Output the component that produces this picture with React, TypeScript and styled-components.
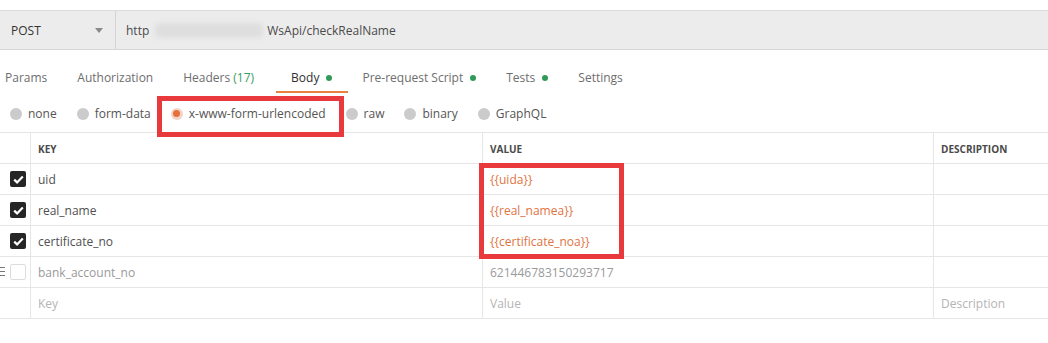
import React from "react";
import styled, { createGlobalStyle } from "styled-components";

const Global = createGlobalStyle`
  html, body { margin: 0; padding: 0; background: #ffffff; }
  body { font-family: "Open Sans", "Liberation Sans", sans-serif; font-size: 12px; color: #505050; }
  * { box-sizing: border-box; }
`;

const Page = styled.div`
  position: relative;
  width: 1048px;
  height: 343px;
  padding-top: 10px;
  overflow: hidden;
`;

const UrlBar = styled.div`
  display: flex;
  height: 40px;
  background: #ececec;
  border-top: 1px solid #dcdcdc;
  border-bottom: 1px solid #d6d6d6;
`;

const Method = styled.div`
  width: 116px;
  display: flex;
  align-items: center;
  justify-content: space-between;
  padding: 0 12px 0 11px;
  border-right: 1px solid #d4d4d4;
  color: #333;
  font-size: 12px;
`;

const Caret = styled.span`
  width: 0;
  height: 0;
  border-left: 4px solid transparent;
  border-right: 4px solid transparent;
  border-top: 5px solid #8a8a8a;
`;

const Url = styled.div`
  display: flex;
  align-items: center;
  padding-left: 10px;
  color: #4a4a4a;
  font-size: 12px;
`;

const Blur = styled.span`
  display: inline-block;
  width: 108px;
  height: 15px;
  margin: 0 4px 0 6px;
  background: #dedede;
  border-radius: 5px;
  filter: blur(2.5px);
`;

const Tabs = styled.div`
  display: flex;
  gap: 30px;
  height: 43px;
  padding: 12px 0 0 5px;
  align-items: center;
`;

const Tab = styled.div<{ $active?: boolean }>`
  position: relative;
  display: flex;
  align-items: center;
  gap: 5px;
  margin-left: ${(p) => (p.$active ? "7px" : "0")};
  color: ${(p) => (p.$active ? "#303030" : "#6e6e6e")};
  font-size: 12px;
  height: 31px;
  &::after {
    content: "";
    display: ${(p) => (p.$active ? "block" : "none")};
    position: absolute;
    left: -15px;
    right: -16px;
    bottom: 0;
    height: 2px;
    background: #e8803f;
  }
`;

const Count = styled.span`
  color: #3a9d5d;
`;

const Dot = styled.span`
  width: 6px;
  height: 6px;
  margin-left: 2px;
  border-radius: 50%;
  background: #2f9a55;
`;

const Radios = styled.div`
  display: flex;
  align-items: center;
  gap: 20px;
  height: 40px;
  padding: 2px 0 0 10px;
  border-bottom: 1px solid #e6e6e6;
`;

const RadioItem = styled.label`
  display: flex;
  align-items: center;
  gap: 6px;
  color: #555;
  font-size: 12px;
`;

const Radio = styled.span<{ $on?: boolean }>`
  width: 12px;
  height: 12px;
  border-radius: 50%;
  background: ${(p) => (p.$on ? "#f0d5c8" : "#cbcbcb")};
  display: flex;
  align-items: center;
  justify-content: center;
  &::after {
    content: "";
    display: ${(p) => (p.$on ? "block" : "none")};
    width: 7px;
    height: 7px;
    border-radius: 50%;
    background: #e8703a;
  }
`;

const Table = styled.div`
  display: grid;
  grid-template-columns: 30px 452px 451px 1fr;
`;

const Cell = styled.div<{ $head?: boolean; $tone?: "normal" | "muted" | "ph" | "var" }>`
  height: 31px;
  display: flex;
  align-items: center;
  padding-left: 7px;
  padding-top: ${(p) => (p.$head ? "2px" : "0")};
  border-bottom: 1px solid #e6e6e6;
  border-left: 1px solid #e6e6e6;
  font-size: ${(p) => (p.$head ? "10px" : "12px")};
  font-weight: ${(p) => (p.$head ? 700 : 400)};
  color: ${(p) =>
    p.$head
      ? "#4a4a4a"
      : p.$tone === "muted"
      ? "#9a9a9a"
      : p.$tone === "ph"
      ? "#b4b4b4"
      : p.$tone === "var"
      ? "#e0743f"
      : "#505050"};
`;

const CheckCell = styled.div`
  position: relative;
  height: 31px;
  display: flex;
  align-items: center;
  padding-left: 10px;
  border-bottom: 1px solid #e6e6e6;
`;

const Box = styled.span<{ $on?: boolean }>`
  width: 16px;
  height: 16px;
  border-radius: 2px;
  background: ${(p) => (p.$on ? "#262626" : "#ffffff")};
  border: ${(p) => (p.$on ? "none" : "1px solid #dcdcdc")};
  display: flex;
  align-items: center;
  justify-content: center;
`;

const Handle = styled.span`
  position: absolute;
  left: -1px;
  top: 10px;
  width: 6px;
  height: 9px;
  background: repeating-linear-gradient(#777 0 1px, transparent 1px 4px);
`;

const Mark = styled.div<{ $x: number; $y: number; $w: number; $h: number }>`
  position: absolute;
  left: ${(p) => p.$x}px;
  top: ${(p) => p.$y}px;
  width: ${(p) => p.$w}px;
  height: ${(p) => p.$h}px;
  border: 5px solid #e8393d;
  pointer-events: none;
`;

const Check = () => (
  <svg width="11" height="9" viewBox="0 0 11 9">
    <path d="M1.2 4.6 L4.1 7.4 L9.8 1.4" fill="none" stroke="#fff" strokeWidth="2.2" />
  </svg>
);

type Row = { key: string; value: string; desc?: string; kind: "on" | "off" | "new" };

const rows: Row[] = [
  { key: "uid", value: "{{uida}}", kind: "on" },
  { key: "real_name", value: "{{real_namea}}", kind: "on" },
  { key: "certificate_no", value: "{{certificate_noa}}", kind: "on" },
  { key: "bank_account_no", value: "621446783150293717", kind: "off" },
  { key: "Key", value: "Value", desc: "Description", kind: "new" },
];

export default function App() {
  return (
    <Page>
      <Global />
      <UrlBar>
        <Method>
          POST
          <Caret />
        </Method>
        <Url>
          http
          <Blur />
          WsApi/checkRealName
        </Url>
      </UrlBar>
      <Tabs>
        <Tab>Params</Tab>
        <Tab>Authorization</Tab>
        <Tab>
          <span>
            Headers <Count>(17)</Count>
          </span>
        </Tab>
        <Tab $active>
          Body <Dot />
        </Tab>
        <Tab>
          Pre-request Script <Dot />
        </Tab>
        <Tab>
          Tests <Dot />
        </Tab>
        <Tab>Settings</Tab>
      </Tabs>
      <Radios>
        {["none", "form-data", "x-www-form-urlencoded", "raw", "binary", "GraphQL"].map((r) => (
          <RadioItem key={r}>
            <Radio $on={r === "x-www-form-urlencoded"} />
            {r}
          </RadioItem>
        ))}
      </Radios>
      <Table>
        <CheckCell />
        <Cell $head>KEY</Cell>
        <Cell $head>VALUE</Cell>
        <Cell $head>DESCRIPTION</Cell>
        {rows.map((r) => (
          <React.Fragment key={r.key}>
            <CheckCell>
              {r.kind === "on" && (
                <Box $on>
                  <Check />
                </Box>
              )}
              {r.kind === "off" && (
                <>
                  <Handle />
                  <Box />
                </>
              )}
            </CheckCell>
            <Cell $tone={r.kind === "on" ? "normal" : r.kind === "off" ? "muted" : "ph"}>{r.key}</Cell>
            <Cell $tone={r.kind === "on" ? "var" : r.kind === "off" ? "muted" : "ph"}>{r.value}</Cell>
            <Cell $tone="ph">{r.desc ?? ""}</Cell>
          </React.Fragment>
        ))}
      </Table>
      <Mark $x={157} $y={96} $w={187} $h={41} />
      <Mark $x={479} $y={163} $w={145} $h={96} />
    </Page>
  );
}
